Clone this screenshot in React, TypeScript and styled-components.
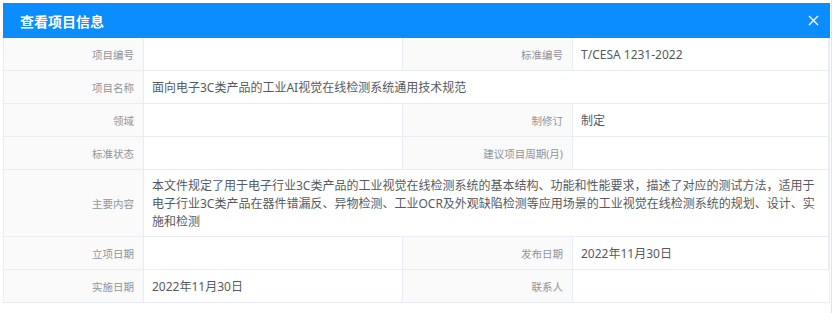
import React from "react";
import styled, { createGlobalStyle } from "styled-components";

const GlobalStyle = createGlobalStyle`
  html, body {
    margin: 0;
    padding: 0;
    background: #ffffff;
  }
  body {
    font-family: "Noto Sans", "Noto Sans CJK SC", sans-serif;
  }
`;

type Field = {
  label: string;
  value?: string;
  wide?: boolean;
};

const rows: Field[][] = [
  [{ label: "项目编号" }, { label: "标准编号", value: "T/CESA 1231-2022" }],
  [{ label: "项目名称", value: "面向电子3C类产品的工业AI视觉在线检测系统通用技术规范", wide: true }],
  [{ label: "领域" }, { label: "制修订", value: "制定" }],
  [{ label: "标准状态" }, { label: "建议项目周期(月)" }],
  [
    {
      label: "主要内容",
      value:
        "本文件规定了用于电子行业3C类产品的工业视觉在线检测系统的基本结构、功能和性能要求，描述了对应的测试方法，适用于电子行业3C类产品在器件错漏反、异物检测、工业OCR及外观缺陷检测等应用场景的工业视觉在线检测系统的规划、设计、实施和检测",
      wide: true,
    },
  ],
  [{ label: "立项日期" }, { label: "发布日期", value: "2022年11月30日" }],
  [{ label: "实施日期", value: "2022年11月30日" }, { label: "联系人" }],
];

function App() {
  return (
    <>
      <GlobalStyle />
      <Page>
        <Modal>
          <Header>
            <Title>查看项目信息</Title>
            <Close aria-label="close">
              <svg width="11" height="11" viewBox="0 0 11 11">
                <path d="M1 1 L10 10 M10 1 L1 10" stroke="#ffffff" strokeWidth="1.4" />
              </svg>
            </Close>
          </Header>
          <Grid>
            {rows.map((row) =>
              row.map((f) => (
                <React.Fragment key={f.label}>
                  <Label>{f.label}</Label>
                  <Value $wide={f.wide}>{f.value}</Value>
                </React.Fragment>
              ))
            )}
          </Grid>
        </Modal>
        <Track />
      </Page>
    </>
  );
}

const Page = styled.div`
  display: flex;
  align-items: flex-start;
  height: 313px;
  padding: 3px 0 0 3px;
  box-sizing: border-box;
  overflow: hidden;
`;

const Modal = styled.div`
  width: 827px;
  display: flex;
  flex-direction: column;
`;

const Header = styled.div`
  height: 35px;
  background: #0b8cff;
  display: flex;
  align-items: center;
  justify-content: space-between;
  padding: 0 9px 0 17px;
`;

const Title = styled.div`
  color: #ffffff;
  font-size: 14px;
  font-weight: 700;
`;

const Close = styled.div`
  width: 16px;
  height: 16px;
  display: flex;
  align-items: center;
  justify-content: center;
`;

const Grid = styled.div`
  display: grid;
  grid-template-columns: 140px 259px 170px 1fr;
  border-left: 1px solid #e8edf5;
  border-right: 1px solid #e8edf5;
  height: 265px;
  overflow: hidden;
  align-content: start;
`;

const Cell = styled.div`
  box-sizing: border-box;
  min-height: 33px;
  border-right: 1px solid #e8edf5;
  border-bottom: 1px solid #e8edf5;
  display: flex;
  align-items: center;
`;

const Label = styled(Cell)`
  background: #fafafa;
  padding: 7px 9px 5px 9px;
  line-height: 18px;
  font-size: 10.5px;
  color: #909399;
  justify-content: flex-end;
  text-align: right;
`;

const Value = styled(Cell)<{ $wide?: boolean }>`
  grid-column: ${(p) => (p.$wide ? "span 3" : "span 1")};
  padding: 7px 9px 5px 8px;
  line-height: 18px;
  font-size: 12px;
  color: #555a61;
  &:last-child {
    border-right: none;
  }
`;

const Track = styled.div`
  width: 1px;
  height: 313px;
  margin-top: -3px;
  margin-left: 1px;
  background: #e4e4e4;
`;

export default App;
